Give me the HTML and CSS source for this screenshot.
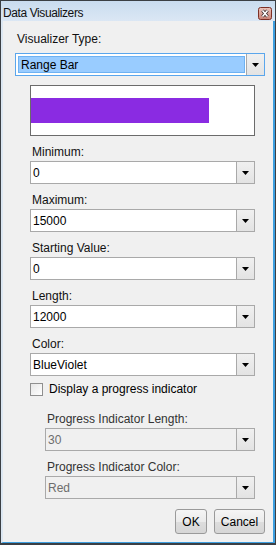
FILE: index.html
```html
<!DOCTYPE html>
<html lang="en">
<head>
    <meta charset="UTF-8">
    <title>Data Visualizers</title>
    <link rel="stylesheet" href="styles.css">
</head>
<body>
    <div class="window">
        <div class="titlebar">
            <span class="title">Data Visualizers</span>
            <span class="close">
                <svg width="14" height="13" viewBox="0 0 14 13">
                    <defs>
                        <linearGradient id="cg" x1="0" y1="0" x2="0" y2="1">
                            <stop offset="0" stop-color="#eac3bb"/>
                            <stop offset="1" stop-color="#c98275"/>
                        </linearGradient>
                    </defs>
                    <rect x="0.5" y="0.5" width="13" height="12" rx="2" fill="url(#cg)" stroke="#7d2f25"/>
                    <path d="M4.5 3.5 L9.5 9.5 M9.5 3.5 L4.5 9.5" stroke="#3a2a2a" stroke-width="3.2"/>
                    <path d="M4.5 3.5 L9.5 9.5 M9.5 3.5 L4.5 9.5" stroke="#fff" stroke-width="1.6"/>
                </svg>
            </span>
        </div>
        <div class="frame">
            <div class="field type">
                <label>Visualizer Type:</label>
                <div class="combo focus">
                    <span class="value"><span class="sel">Range Bar</span></span>
                    <span class="arrow"></span>
                </div>
            </div>

            <div class="preview">
                <div class="bar" style="width: 80%"></div>
            </div>

            <div class="field">
                <label>Minimum:</label>
                <div class="combo"><span class="value">0</span><span class="arrow"></span></div>
            </div>
            <div class="field">
                <label>Maximum:</label>
                <div class="combo"><span class="value">15000</span><span class="arrow"></span></div>
            </div>
            <div class="field">
                <label>Starting Value:</label>
                <div class="combo"><span class="value">0</span><span class="arrow"></span></div>
            </div>
            <div class="field">
                <label>Length:</label>
                <div class="combo"><span class="value">12000</span><span class="arrow"></span></div>
            </div>
            <div class="field">
                <label>Color:</label>
                <div class="combo"><span class="value">BlueViolet</span><span class="arrow"></span></div>
            </div>

            <div class="check-row">
                <span class="checkbox"></span>
                <span>Display a progress indicator</span>
            </div>

            <div class="field sub first">
                <label>Progress Indicator Length:</label>
                <div class="combo disabled"><span class="value">30</span><span class="arrow"></span></div>
            </div>
            <div class="field sub">
                <label>Progress Indicator Color:</label>
                <div class="combo disabled"><span class="value">Red</span><span class="arrow"></span></div>
            </div>

            <div class="buttons">
                <button class="ok">OK</button>
                <button class="cancel">Cancel</button>
            </div>
        </div>
    </div>
</body>
</html>
```

FILE: styles.css
```css
body {
    margin: 0;
    font-family: "Liberation Sans", Arial, sans-serif;
    font-size: 12px;
    color: #000;
    background: #fff;
}
.window {
    width: 276px;
    height: 545px;
    box-sizing: border-box;
    border: 1px solid #3b3f44;
    border-bottom-width: 2px;
    display: flex;
    flex-direction: column;
    background: #f0f0f0;
}
.titlebar {
    height: 20px;
    flex: none;
    display: flex;
    align-items: center;
    justify-content: space-between;
    padding: 0 3px 0 2px;
    background: linear-gradient(#c9dcef, #dbe7f4);
}
.title {
    font-size: 12px;
    letter-spacing: -0.4px;
    color: #111;
    padding-top: 3px;
}
.close {
    display: flex;
    margin-top: 4px;
}
.frame {
    flex: 1;
    display: flex;
    flex-direction: column;
    border-left: 2px solid #dce7f2;
    border-right: 2px solid #3d9fe0;
    border-bottom: 1px solid #3d9fe0;
    padding: 11px 8px 0 12px;
}
.field {
    display: flex;
    flex-direction: column;
    margin: 9px 10px 0 15px;
}
.field label {
    line-height: 14px;
    padding-left: 2px;
    color: #111;
}
.field .combo {
    margin-top: 2px;
}
.field.type {
    margin: 0;
}
.field.type .combo {
    margin-top: 7px;
}
.field.sub {
    margin-left: 30px;
}
.field.sub.first {
    margin-top: 16px;
}
.field.sub label {
    color: #333;
}
.combo {
    height: 23px;
    box-sizing: border-box;
    display: flex;
    border: 1px solid #a9a9a9;
    background: #fff;
}
.combo .value {
    flex: 1;
    display: flex;
    align-items: center;
    padding-left: 2px;
}
.combo .arrow {
    width: 17px;
    flex: none;
    border-left: 1px solid #a9a9a9;
    background: linear-gradient(#f0f0f0, #e3e3e3);
    display: flex;
    align-items: center;
    justify-content: center;
}
.combo .arrow::before {
    content: "";
    width: 7px;
    height: 4px;
    background: #000;
    clip-path: polygon(0 0, 100% 0, 50% 100%);
    margin-top: 1px;
}
.combo.focus {
    border-color: #5aa6ec;
}
.combo.focus .value {
    padding: 2px 1px 2px 2px;
}
.combo.focus .sel {
    flex: 1;
    height: 100%;
    box-sizing: border-box;
    display: flex;
    align-items: center;
    padding-left: 2px;
    background: #99ccff;
    border: 1px solid #6fb2f2;
}
.combo.disabled {
    background: #f0f0f0;
}
.combo.disabled .value {
    color: #6d6d6d;
}
.preview {
    margin: 9px 10px 0 15px;
    height: 51px;
    box-sizing: border-box;
    border: 1px solid #6b6b6b;
    background: #fff;
    display: flex;
    align-items: center;
}
.bar {
    height: 25px;
    background: #8a2be2;
}
.check-row {
    margin: 6px 0 0 15px;
    display: flex;
    align-items: center;
    gap: 6px;
    line-height: 14px;
}
.checkbox {
    width: 13px;
    height: 13px;
    box-sizing: border-box;
    border: 1px solid #8f8f8f;
    background: linear-gradient(135deg, #e6e6e6, #fff);
}
.buttons {
    margin-top: 10px;
    display: flex;
    justify-content: flex-end;
    gap: 7px;
}
.buttons button {
    height: 25px;
    box-sizing: border-box;
    font-family: inherit;
    font-size: 12px;
    color: #000;
    border: 1px solid #9a9a9a;
    border-radius: 3px;
    background: linear-gradient(#f5f5f5 0%, #ebebeb 50%, #dddddd 51%, #d6d6d6 100%);
    padding: 0;
}
.ok {
    width: 32px;
}
.cancel {
    width: 51px;
}
```
